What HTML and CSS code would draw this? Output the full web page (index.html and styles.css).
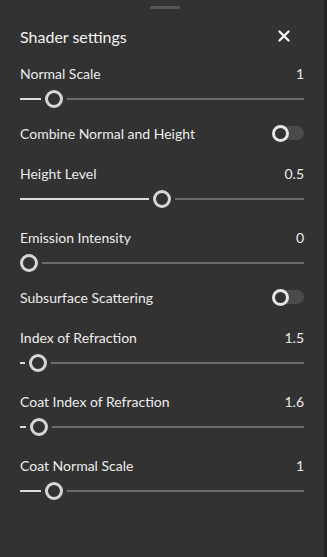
FILE: index.html
```html
<!DOCTYPE html>
<html lang="en">
<head>
    <meta charset="UTF-8">
    <meta name="viewport" content="width=device-width, initial-scale=1.0">
    <title>Shader settings</title>
    <link rel="stylesheet" href="styles.css">
</head>
<body>
    <div class="panel">
        <div class="grip"></div>

        <div class="panel-header">
            <h2 class="panel-title">Shader settings</h2>
            <button class="close-btn" aria-label="Close">
                <svg width="12" height="12" viewBox="0 0 12 12">
                    <path d="M1.5 1.5 L10.5 10.5 M10.5 1.5 L1.5 10.5" stroke="#f0f0f0" stroke-width="2.4" stroke-linecap="round"/>
                </svg>
            </button>
        </div>

        <div class="fields">
            <!-- Normal Scale -->
            <div class="slider-field">
                <div class="field-head">
                    <span class="field-label">Normal Scale</span>
                    <span class="field-value">1</span>
                </div>
                <div class="slider">
                    <div class="slider-fill" style="width: 21px;"></div>
                    <div class="slider-thumb"></div>
                    <div class="slider-track"></div>
                </div>
            </div>

            <div class="toggle-field">
                <span class="field-label">Combine Normal and Height</span>
                <div class="toggle"><div class="toggle-knob"></div></div>
            </div>

            <div class="slider-field">
                <div class="field-head">
                    <span class="field-label">Height Level</span>
                    <span class="field-value">0.5</span>
                </div>
                <div class="slider">
                    <div class="slider-fill" style="width: 129px;"></div>
                    <div class="slider-thumb"></div>
                    <div class="slider-track"></div>
                </div>
            </div>

            <div class="slider-field">
                <div class="field-head">
                    <span class="field-label">Emission Intensity</span>
                    <span class="field-value">0</span>
                </div>
                <div class="slider">
                    <div class="slider-thumb"></div>
                    <div class="slider-track"></div>
                </div>
            </div>

            <div class="toggle-field">
                <span class="field-label">Subsurface Scattering</span>
                <div class="toggle"><div class="toggle-knob"></div></div>
            </div>

            <div class="slider-field">
                <div class="field-head">
                    <span class="field-label">Index of Refraction</span>
                    <span class="field-value">1.5</span>
                </div>
                <div class="slider">
                    <div class="slider-fill" style="width: 5px;"></div>
                    <div class="slider-thumb"></div>
                    <div class="slider-track"></div>
                </div>
            </div>

            <div class="slider-field">
                <div class="field-head">
                    <span class="field-label">Coat Index of Refraction</span>
                    <span class="field-value">1.6</span>
                </div>
                <div class="slider">
                    <div class="slider-fill" style="width: 6px;"></div>
                    <div class="slider-thumb"></div>
                    <div class="slider-track"></div>
                </div>
            </div>

            <div class="slider-field">
                <div class="field-head">
                    <span class="field-label">Coat Normal Scale</span>
                    <span class="field-value">1</span>
                </div>
                <div class="slider">
                    <div class="slider-fill" style="width: 21px;"></div>
                    <div class="slider-thumb"></div>
                    <div class="slider-track"></div>
                </div>
            </div>
        </div>
    </div>
</body>
</html>
```

FILE: styles.css
```css
:root {
    --panel-bg: #323232;
    --text: #ececec;
    --title: #f2f2f2;
    --track: #6c6c6c;
    --fill: #dcdcdc;
    --thumb: #d6d6d6;
    --toggle-bg: #4a4a4a;
}

* {
    box-sizing: border-box;
    margin: 0;
    font-family: Lato, 'Open Sans', sans-serif;
}

body {
    background: #262626;
    height: 557px;
    overflow: hidden;
}

.panel {
    width: 324px;
    height: 557px;
    background: var(--panel-bg);
    padding: 6px 20px 0;
    display: flex;
    flex-direction: column;
}

.grip {
    width: 30px;
    height: 3px;
    background: #565656;
    border-radius: 2px;
    align-self: center;
    margin-left: 5px;
}

.panel-header {
    height: 24px;
    margin-top: 15px;
    display: flex;
    align-items: center;
    justify-content: space-between;
}

.panel-title {
    font-size: 16px;
    font-weight: 400;
    color: var(--title);
}

.close-btn {
    background: none;
    border: none;
    padding: 0;
    width: 12px;
    height: 12px;
    margin-right: 14px;
    display: flex;
    cursor: pointer;
}

.fields {
    margin-top: 11px;
    display: flex;
    flex-direction: column;
    gap: 16px;
}

.slider-field {
    padding-top: 4px;
}

.field-head,
.toggle-field {
    height: 20px;
    display: flex;
    align-items: center;
    justify-content: space-between;
}

.field-label,
.field-value {
    font-size: 14px;
    color: var(--text);
}

.slider {
    height: 16px;
    margin-top: 8px;
    display: flex;
    align-items: center;
}

.slider-fill {
    height: 2px;
    background: var(--fill);
    margin-right: 4px;
}

.slider-thumb {
    width: 18px;
    height: 18px;
    flex-shrink: 0;
    border: 3px solid var(--thumb);
    border-radius: 50%;
    background: var(--panel-bg);
}

.slider-track {
    flex: 1;
    height: 2px;
    background: var(--track);
    margin-left: 4px;
}

.toggle {
    width: 32px;
    height: 14px;
    background: var(--toggle-bg);
    border-radius: 7px;
    display: flex;
    align-items: center;
}

.toggle-knob {
    width: 17px;
    height: 17px;
    border: 3px solid #e6e6e6;
    border-radius: 50%;
    background: var(--panel-bg);
}
```
